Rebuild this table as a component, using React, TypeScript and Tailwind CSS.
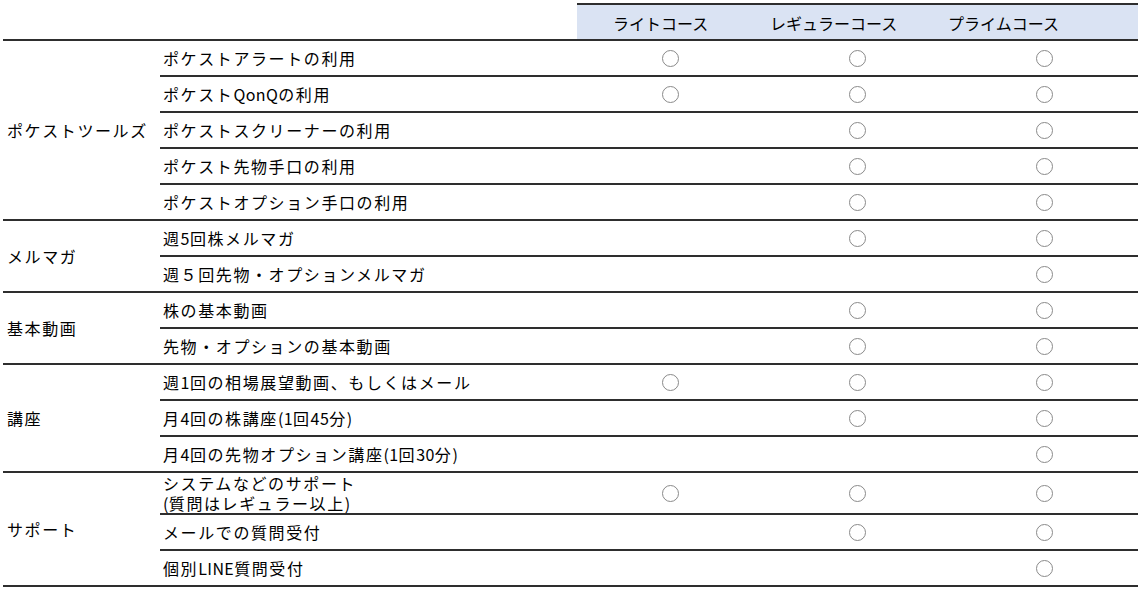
import React from "react";

type Item = { label: React.ReactNode; marks: [boolean, boolean, boolean]; tall?: boolean };
type Group = { name: string; items: Item[] };

const L = ({ children }: { children: React.ReactNode }) => (
  <span className="tracking-[0.4px]">{children}</span>
);

const groups: Group[] = [
  {
    name: "ポケストツールズ",
    items: [
      { label: "ポケストアラートの利用", marks: [true, true, true] },
      { label: <>ポケスト<L>QonQ</L>の利用</>, marks: [true, true, true] },
      { label: "ポケストスクリーナーの利用", marks: [false, true, true] },
      { label: "ポケスト先物手口の利用", marks: [false, true, true] },
      { label: "ポケストオプション手口の利用", marks: [false, true, true] },
    ],
  },
  {
    name: "メルマガ",
    items: [
      { label: <>週<L>5</L>回株メルマガ</>, marks: [false, true, true] },
      { label: "週５回先物・オプションメルマガ", marks: [false, false, true] },
    ],
  },
  {
    name: "基本動画",
    items: [
      { label: "株の基本動画", marks: [false, true, true] },
      { label: "先物・オプションの基本動画", marks: [false, true, true] },
    ],
  },
  {
    name: "講座",
    items: [
      { label: <>週<L>1</L>回の相場展望動画、もしくはメール</>, marks: [true, true, true] },
      { label: <>月<L>4</L>回の株講座<L>(1</L>回<L>45</L>分<L>)</L></>, marks: [false, true, true] },
      { label: <>月<L>4</L>回の先物オプション講座<L>(1</L>回<L>30</L>分<L>)</L></>, marks: [false, false, true] },
    ],
  },
  {
    name: "サポート",
    items: [
      {
        label: (
          <span className="flex flex-col">
            <span className="block h-[20px] leading-[20px]">システムなどのサポート</span>
            <span className="block h-[20px] leading-[20px]">
              <L>(</L>質問はレギュラー以上<L>)</L>
            </span>
          </span>
        ),
        marks: [true, true, true],
        tall: true,
      },
      { label: "メールでの質問受付", marks: [false, true, true] },
      { label: <>個別<L>LINE</L>質問受付</>, marks: [false, false, true] },
    ],
  },
];

function Circle() {
  return <div className="w-[17px] h-[17px] rounded-full border border-[#8a8a8a]" />;
}

export default function App() {
  return (
    <div
      className="w-[1143px] h-[592px] bg-white text-black pl-[3px] pt-[3px]"
      style={{ fontFamily: '"Noto Sans CJK JP", "Noto Sans", sans-serif' }}
    >
      <div className="w-[1135px]">
        {/* header */}
        <div className="flex border-b-2 border-[#2e2e2e]">
          <div className="w-[574px]" />
          <div className="flex border-t-2 border-[#2e2e2e] bg-[#dae3f3] h-[36px] text-[16px] w-[561px]">
            <div className="w-[193px] flex items-center pl-[36px] pt-[1px]">ライトコース</div>
            <div className="w-[178px] flex items-center pt-[1px]">レギュラーコース</div>
            <div className="flex-1 flex items-center pt-[1px]">プライムコース</div>
          </div>
        </div>
        {groups.map((g) => (
          <div key={g.name} className="flex border-b-2 border-[#2e2e2e]">
            <div className="w-[157px] flex items-center pl-[4px] text-[16px] tracking-[1.6px]">{g.name}</div>
            <div className="flex-1">
              {g.items.map((it, i) => {
                const last = i === g.items.length - 1;
                const h = it.tall ? (last ? "h-[40px]" : "h-[42px]") : last ? "h-[34px]" : "h-[36px]";
                return (
                  <div key={i} className={`flex ${last ? "" : "border-b-2 border-[#2e2e2e]"} ${h}`}>
                    <div className="w-[417px] flex items-center pl-[3px] text-[16px] tracking-[1.6px] whitespace-nowrap">
                      {it.label}
                    </div>
                    {it.marks.map((m, j) => (
                      <div key={j} className="w-[187px] flex items-center justify-center">
                        {m ? <Circle /> : null}
                      </div>
                    ))}
                  </div>
                );
              })}
            </div>
          </div>
        ))}
      </div>
    </div>
  );
}
